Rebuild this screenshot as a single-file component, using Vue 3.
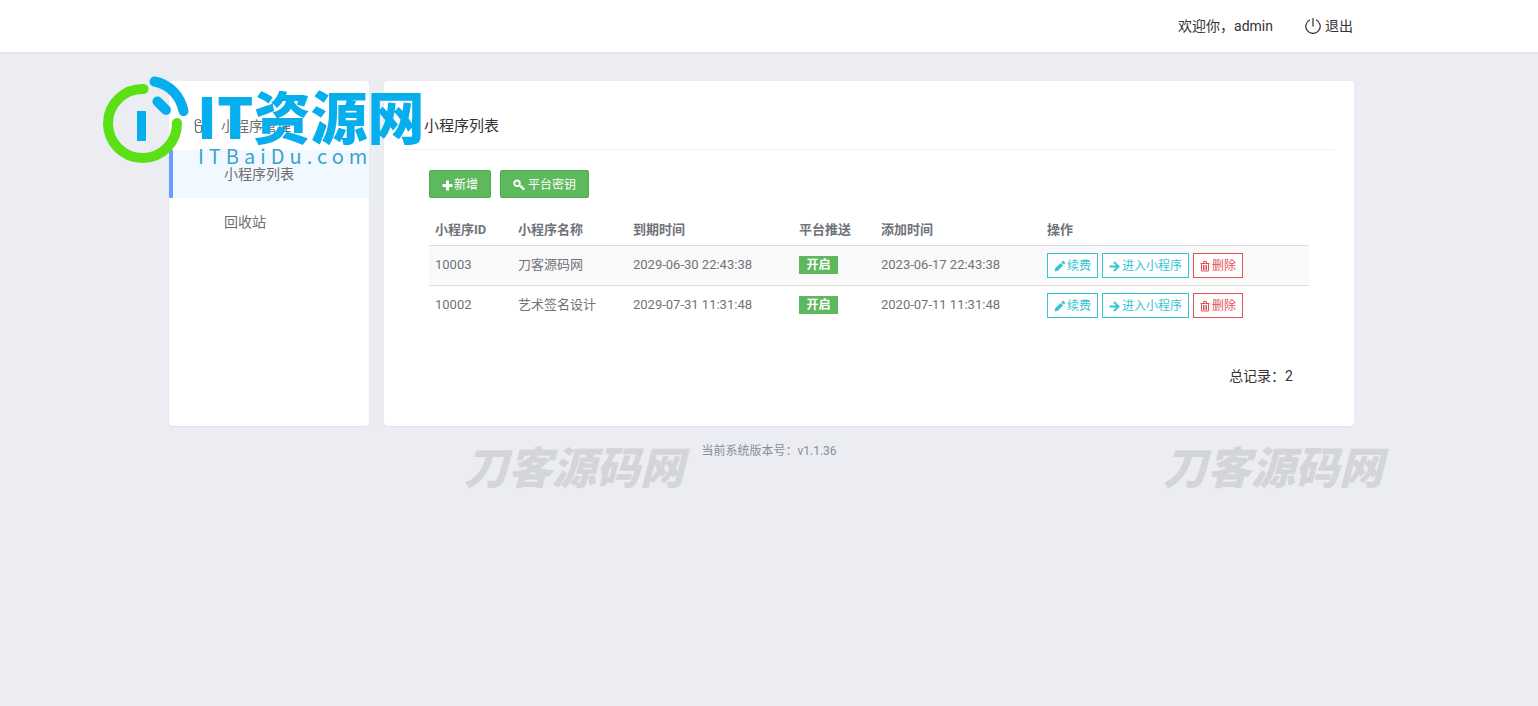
<script setup>
const rows = [
  { id: '10003', name: '刀客源码网', expire: '2029-06-30 22:43:38', push: '开启', created: '2023-06-17 22:43:38' },
  { id: '10002', name: '艺术签名设计', expire: '2029-07-31 11:31:48', push: '开启', created: '2020-07-11 11:31:48' },
]
</script>

<template>
  <div class="page">
    <header class="topbar">
      <div class="wrap topbar-inner">
        <span>欢迎你，admin</span>
        <a href="#" class="logout">
          <svg width="16" height="16" viewBox="0 0 16 16" aria-hidden="true">
            <path d="M8 0v8.500M5 1.700a7.200 7.200 0 1 0 6 0" fill="none" stroke="currentColor" stroke-width="1.200" />
          </svg>
          退出
        </a>
      </div>
    </header>

    <div class="wrap body">
      <aside class="card sidebar">
        <nav>
          <a href="#" class="nav-group">
            <svg width="16" height="16" viewBox="0 0 16 16" aria-hidden="true">
              <path
                d="M7 4.500A3 3 0 1 0 4 7.500h8A3 3 0 1 0 9 4.500V7M4.500 7.500h-3V12a2.500 2.500 0 0 0 2.500 2.500h1.500A2 2 0 0 0 7.500 12.500V7.500M9 8v4.500A2.500 2.500 0 1 0 12 9.500M3.500 4.500h3"
                fill="none" stroke="currentColor" stroke-width="1.200"
              />
            </svg>
            小程序管理
          </a>
          <a href="#" class="nav-item active">小程序列表</a>
          <a href="#" class="nav-item">回收站</a>
        </nav>
      </aside>

      <main class="card main">
        <h1 class="title">小程序列表</h1>
        <div class="content">
          <div class="toolbar">
            <button type="button" class="btn">
              <svg width="11" height="12" viewBox="0 0 11 12" aria-hidden="true">
                <path d="M4 1.500h3V5h3.500v3H7v3.500H4V8H.5V5H4z" fill="currentColor" />
              </svg>
              新增
            </button>
            <button type="button" class="btn btn-key">
              <svg width="12" height="12" viewBox="0 0 12 12" aria-hidden="true">
                <circle cx="4" cy="4.300" r="2.800" fill="none" stroke="currentColor" stroke-width="1.900" />
                <path d="M6 6.200l5 4.800M8 8.600l1.600-1.700M9.900 10.500l1.700-1.700" fill="none" stroke="currentColor" stroke-width="1.700" />
              </svg>
              平台密钥
            </button>
          </div>

          <table class="table">
            <colgroup>
              <col class="c-id" />
              <col class="c-name" />
              <col class="c-time" />
              <col class="c-push" />
              <col class="c-time" />
              <col />
            </colgroup>
            <thead>
              <tr>
                <th scope="col">小程序ID</th>
                <th scope="col">小程序名称</th>
                <th scope="col">到期时间</th>
                <th scope="col">平台推送</th>
                <th scope="col">添加时间</th>
                <th scope="col">操作</th>
              </tr>
            </thead>
            <tbody>
              <tr v-for="row in rows" :key="row.id">
                <td>{{ row.id }}</td>
                <td>{{ row.name }}</td>
                <td>{{ row.expire }}</td>
                <td><span class="badge">{{ row.push }}</span></td>
                <td>{{ row.created }}</td>
                <td>
                  <div class="actions">
                    <button type="button" class="act">
                      <svg width="11" height="12" viewBox="0 0 11 12" aria-hidden="true">
                        <path d="M.5 11.500l.7-3.300L6.500 2.900 9.100 5.500l-5.300 5.300zM7.200 2.200L8.500 1q.5-.4 1 0L11 2.500q.4.500 0 1L9.800 4.800z" fill="currentColor" />
                      </svg>
                      续费
                    </button>
                    <button type="button" class="act">
                      <svg width="11" height="12" viewBox="0 0 11 12" aria-hidden="true">
                        <path d="M.5 6.500h8.500M5 2l4.500 4.500L5 11" fill="none" stroke="currentColor" stroke-width="2" />
                      </svg>
                      进入小程序
                    </button>
                    <button type="button" class="act danger">
                      <svg width="10" height="12" viewBox="0 0 10 12" aria-hidden="true">
                        <path
                          d="M.5 3.500h9M3.500 3V1.500h3V3M1.500 3.500v7.500h7V3.500M3.500 5v5M5 5v5M6.500 5v5"
                          fill="none" stroke="currentColor" stroke-width="1"
                        />
                      </svg>
                      删除
                    </button>
                  </div>
                </td>
              </tr>
            </tbody>
          </table>

          <div class="total">总记录：2</div>
        </div>
      </main>

      <div class="brand" aria-hidden="true">
        <svg class="brand-mark" width="88" height="88" viewBox="0 0 88 88">
          <g fill="none" stroke-linecap="round">
            <path d="M40.500 13A34.500 34.500 0 1 0 74 47" stroke="#5be016" stroke-width="10" />
            <path d="M51.500 5.500C66 8 77.500 20 80.500 35" stroke="#06aeee" stroke-width="10" />
            <path d="M54.500 25.500l8.500 8.500" stroke="#06aeee" stroke-width="10" />
          </g>
          <path d="M34 35h9v30h-9z" fill="#06aeee" />
        </svg>
        <div class="brand-text">
          <div class="brand-name">IT资源网</div>
          <div class="brand-url">ITBaiDu.com</div>
        </div>
      </div>
      <div class="stamp stamp-left" aria-hidden="true">刀客源码网</div>
      <div class="stamp stamp-right" aria-hidden="true">刀客源码网</div>
    </div>

    <footer class="footer">当前系统版本号：v1.1.36</footer>
  </div>
</template>

<style>
body {
  margin: 0;
  background: #ecedf2;
}
</style>

<style scoped>
.page {
  min-height: 100vh;
  background: #ecedf2;
  color: #333;
  font: 14px/20px Roboto, "Noto Sans CJK SC", sans-serif;
  overflow-x: hidden;
}
.page * {
  box-sizing: border-box;
}
a {
  color: inherit;
  text-decoration: none;
}
svg {
  flex: none;
}
.wrap {
  max-width: 1200px;
  margin: 0 auto;
  padding-right: 15px;
}
.topbar {
  background: #fff;
  box-shadow: 0 1px 2px rgba(0, 0, 0, 0.08);
}
.topbar-inner {
  height: 52px;
  display: flex;
  align-items: center;
  justify-content: flex-end;
  gap: 32px;
  padding-right: 16px;
}
.logout {
  display: flex;
  align-items: center;
  gap: 4px;
}
.body {
  position: relative;
  display: flex;
  gap: 15px;
  margin-top: 29px;
}
.card {
  background: #fff;
  border-radius: 4px;
  box-shadow: 0 1px 2px rgba(0, 0, 0, 0.06);
}
.sidebar {
  flex: none;
  width: 200px;
  padding-top: 21px;
  color: #6e6e6e;
}
.nav-group,
.nav-item {
  display: flex;
  align-items: center;
  height: 48px;
}
.nav-group {
  gap: 11px;
  padding-left: 25px;
}
.nav-item {
  padding-left: 51px;
  border-left: 4px solid transparent;
}
.nav-item.active {
  background: #f2f8ff;
  border-left-color: #66a0ff;
}
.main {
  flex: 1;
  min-width: 0;
  padding: 20px 20px 40px;
}
.title {
  display: flex;
  align-items: center;
  gap: 9px;
  height: 49px;
  margin: 0;
  padding: 2px 0 0 8px;
  border-bottom: 1px solid #eef0f3;
  font-size: 15px;
  font-weight: 400;
}
.title::before {
  content: "";
  width: 3px;
  height: 14px;
  background: #0e90d2;
}
.content {
  padding: 20px 25px 0;
}
.toolbar {
  display: flex;
  gap: 9px;
}
button {
  display: flex;
  align-items: center;
  justify-content: center;
  font: inherit;
  font-size: 12px;
  white-space: nowrap;
  cursor: pointer;
}
.btn {
  height: 28px;
  padding: 2px 12px 0;
  gap: 1px;
  color: #fff;
  background: #5eb95e;
  border: 1px solid #4caf4c;
  border-radius: 2px;
}
.btn-key {
  gap: 3px;
}
.table {
  width: 100%;
  margin-top: 15px;
  border-collapse: collapse;
  table-layout: fixed;
  font-size: 13px;
  color: #6f737a;
}
.c-id {
  width: 83px;
}
.c-name {
  width: 115px;
}
.c-time {
  width: 166px;
}
.c-push {
  width: 82px;
}
th,
td {
  padding: 0 6px;
  text-align: left;
  white-space: nowrap;
}
th {
  height: 32px;
  padding-top: 2px;
  font-weight: 700;
}
td {
  height: 40px;
  border-top: 1px solid #ddd;
}
tbody tr:nth-child(odd) {
  background: #f9f9f9;
}
.badge {
  display: block;
  width: 39px;
  background: #5eb95e;
  color: #fff;
  font-size: 12px;
  font-weight: 700;
  line-height: 18px;
  text-align: center;
}
.actions {
  display: flex;
  gap: 4px;
}
.act {
  height: 25px;
  padding: 1px 6px 0;
  gap: 2px;
  color: #36c6d3;
  background: #fff;
  border: 1px solid #36c6d3;
}
.act.danger {
  color: #e7505a;
  border-color: #e7505a;
}
.total {
  margin-top: 41px;
  padding-right: 16px;
  text-align: right;
}
.footer {
  margin-top: 15px;
  text-align: center;
  font-size: 12px;
  color: #868e9b;
}
.brand {
  position: absolute;
  left: -66px;
  top: -5px;
  display: flex;
  gap: 6px;
  pointer-events: none;
}
.brand-text {
  font-family: "Noto Sans CJK SC", sans-serif;
  white-space: nowrap;
}
.brand-name {
  padding-top: 8px;
  font-size: 57px;
  font-weight: 900;
  line-height: 60px;
  color: #06aeee;
}
.brand-url {
  padding-left: 1px;
  font-size: 20px;
  line-height: 24px;
  letter-spacing: 5px;
  color: #3ba3cb;
}
.stamp {
  position: absolute;
  top: 362px;
  font: italic 900 44px/44px "Noto Sans CJK SC", sans-serif;
  color: #d4d5d9;
  white-space: nowrap;
  pointer-events: none;
}
.stamp-left {
  left: 295px;
}
.stamp-right {
  left: 994px;
}
</style>
